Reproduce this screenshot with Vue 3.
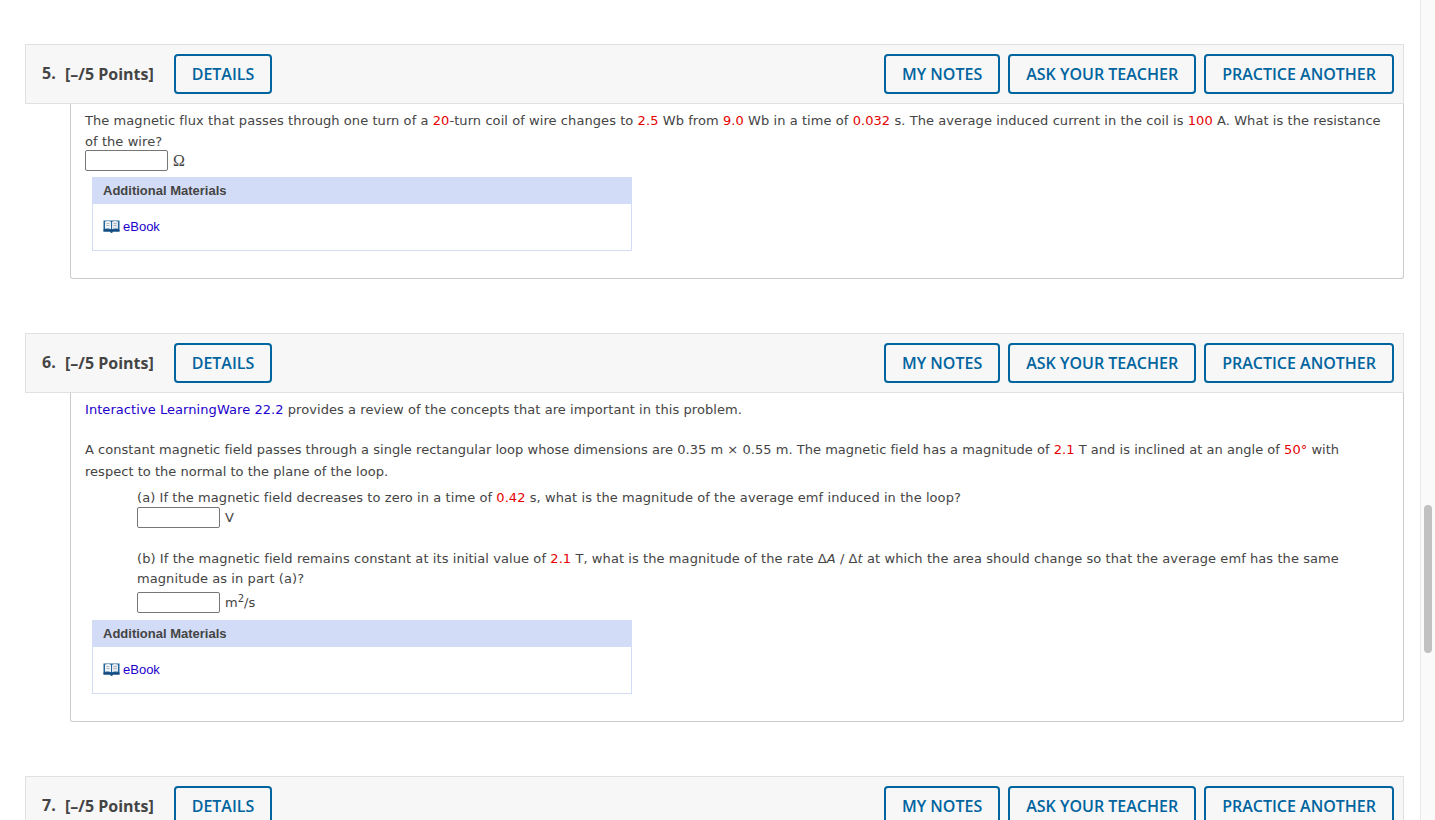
<script setup>
const buttons = ['MY NOTES', 'ASK YOUR TEACHER', 'PRACTICE ANOTHER']
</script>

<template>
  <div class="page">
    <main class="main">
      <section class="question">
        <header class="qhead">
          <span class="num">5.</span>
          <span class="pts">[–/5 Points]</span>
          <a class="btn details">DETAILS</a>
          <div class="right"><a v-for="b in buttons" :key="b" class="btn">{{ b }}</a></div>
        </header>
        <div class="qbody q5">
          <p class="l21">The magnetic flux that passes through one turn of a <b>20</b>-turn coil of wire changes to <b>2.5</b> Wb from <b>9.0</b> Wb in a time of <b>0.032</b> s. The average induced current in the coil is <b>100</b> A. What is the resistance of the wire?</p>
          <div class="answer"><span class="input"></span><span class="omega">Ω</span></div>
          <div class="materials">
            <div class="mhead">Additional Materials</div>
            <div class="mbody">
              <svg class="book" width="17" height="15" viewBox="0 0 17 15"><path d="M.5 1.500h16v11h-6.500l-.8 1.500h-1.400l-.8-1.500h-6.500z" fill="#1f659c"/><path d="M.5 10.500h16v2h-16z" fill="#15497c"/><path d="M2 2.500c2-.7 4.800-.7 6 .4v7.300c-1.300-.9-4-1-6-.4z" fill="#f0f3f6"/><path d="M15 2.500c-2-.7-4.800-.7-6 .4v7.300c1.300-.9 4-1 6-.4z" fill="#e4e8ed"/><path d="M3.300 4.500h3.200M3.300 6.500h3.200M10.500 4.500h3.200M10.500 6.500h3.200" stroke="#b0b8c0" stroke-width="1"/></svg>
              <a class="ebook">eBook</a>
            </div>
          </div>
        </div>
      </section>

      <section class="question">
        <header class="qhead">
          <span class="num">6.</span>
          <span class="pts">[–/5 Points]</span>
          <a class="btn details">DETAILS</a>
          <div class="right"><a v-for="b in buttons" :key="b" class="btn">{{ b }}</a></div>
        </header>
        <div class="qbody q6">
          <p class="intro"><a class="link">Interactive LearningWare 22.2</a> provides a review of the concepts that are important in this problem.</p>
          <p class="para">A constant magnetic field passes through a single rectangular loop whose dimensions are 0.35 m × 0.55 m. The magnetic field has a magnitude of <b>2.1</b> T and is inclined at an angle of <b>50°</b> with respect to the normal to the plane of the loop.</p>
          <div class="part a">
            <p>(a) If the magnetic field decreases to zero in a time of <b>0.42</b> s, what is the magnitude of the average emf induced in the loop?</p>
            <div class="answer small"><span class="input"></span><span class="unit">V</span></div>
          </div>
          <div class="part b">
            <p class="l20">(b) If the magnetic field remains constant at its initial value of <b>2.1</b> T, what is the magnitude of the rate Δ<i>A</i> / Δ<i>t</i> at which the area should change so that the average emf has the same magnitude as in part (a)?</p>
            <div class="answer small"><span class="input"></span><span class="unit">m<sup>2</sup>/s</span></div>
          </div>
          <div class="materials m6">
            <div class="mhead">Additional Materials</div>
            <div class="mbody">
              <svg class="book" width="17" height="15" viewBox="0 0 17 15"><path d="M.5 1.500h16v11h-6.500l-.8 1.500h-1.400l-.8-1.500h-6.500z" fill="#1f659c"/><path d="M.5 10.500h16v2h-16z" fill="#15497c"/><path d="M2 2.500c2-.7 4.800-.7 6 .4v7.300c-1.300-.9-4-1-6-.4z" fill="#f0f3f6"/><path d="M15 2.500c-2-.7-4.800-.7-6 .4v7.300c1.300-.9 4-1 6-.4z" fill="#e4e8ed"/><path d="M3.300 4.500h3.200M3.300 6.500h3.200M10.500 4.500h3.200M10.500 6.500h3.200" stroke="#b0b8c0" stroke-width="1"/></svg>
              <a class="ebook">eBook</a>
            </div>
          </div>
        </div>
      </section>

      <section class="question">
        <header class="qhead">
          <span class="num">7.</span>
          <span class="pts">[–/5 Points]</span>
          <a class="btn details">DETAILS</a>
          <div class="right"><a v-for="b in buttons" :key="b" class="btn">{{ b }}</a></div>
        </header>
      </section>
    </main>
    <aside class="scrollbar"><div class="thumb"></div></aside>
  </div>
</template>

<style>
html, body { margin: 0; height: 100%; overflow: hidden; background: #fff; }
</style>

<style scoped>
.page { display: flex; height: 820px; overflow: hidden; font-family: "DejaVu Sans", Verdana, sans-serif; color: #444; font-size: 13px; }
.main { width: 1404px; padding: 44px 0 0 25px; box-sizing: border-box; flex: none; }
.scrollbar { margin-left: 16px; width: 15px; flex: none; box-sizing: border-box; background: #fafafa; border-left: 1px solid #e8e8e8; padding: 505px 0 0 3px; }
.thumb { width: 8px; height: 148px; border-radius: 4px; background: #c1c1c1; }
.question { margin-bottom: 54px; }
.qhead { height: 60px; box-sizing: border-box; display: flex; align-items: center; background: #f7f7f7; border: 1px solid #e1e1e1; padding: 0 9px 0 16px; font-family: "Open Sans", sans-serif; font-size: 16px; font-weight: 600; }
.num { width: 23px; color: #444; font-weight: 700; position: relative; top: -1px; }
.pts { width: 109px; color: #444; font-weight: 700; }
.btn { display: flex; align-items: center; justify-content: center; box-sizing: border-box; height: 40px; padding: 0 16px; border: 2px solid #00649f; border-radius: 4px; color: #00649f; white-space: nowrap; }
.details { width: 98px; }
.right { margin-left: auto; display: flex; gap: 8px; }
.qbody { margin-left: 45px; border: 1px solid #cbcbcb; border-top: 0; border-radius: 0 0 3px 3px; padding: 6px 14px 27px; }
.q5 { height: 175px; box-sizing: border-box; }
.q6 { height: 329px; box-sizing: border-box; }
p { margin: 0; }
.l21 { line-height: 21px; letter-spacing: 0.072px; }
b { font-weight: 400; color: #e60000; }
.answer { display: flex; align-items: center; }
.q5 .answer { height: 21px; margin-top: -2px; }
.input { display: block; width: 83px; height: 21px; box-sizing: border-box; border: 1px solid #767676; border-radius: 2px; background: #fff; }
.omega { margin-left: 5px; font-family: "Liberation Serif", serif; font-size: 16px; }
.unit { margin-left: 5px; }
.materials { margin: 6px 0 0 7px; width: 540px; box-sizing: border-box; border: 1px solid #d3dcf6; border-top: 0; height: 74px; font-family: "Liberation Sans", Arial, sans-serif; font-size: 13px; }
.mhead { height: 27px; margin: 0 -1px; background: #d3dcf6; color: #444; font-weight: 700; line-height: 27px; padding-left: 11px; }
.mbody { display: flex; align-items: center; height: 44px; padding-left: 10px; gap: 3px; }
.ebook { color: #2200cc; }
.book { display: block; }
.intro { line-height: 21px; letter-spacing: 0.065px; }
.para { margin-top: 19px; line-height: 22px; letter-spacing: 0.03px; }
.link { color: #2200cc; }
.part { margin-left: 52px; }
.part.a { margin-top: 5px; }
.part.a p { line-height: 20px; letter-spacing: 0.075px; }
.part.a .answer { margin-top: -1px; }
.part.b { margin-top: 21px; }
.l20 { line-height: 20px; letter-spacing: 0.08px; }
.part.b .answer { margin-top: 3px; }
sup { font-size: 10px; line-height: 0; }
.m6 { margin-top: 7px; }
</style>
